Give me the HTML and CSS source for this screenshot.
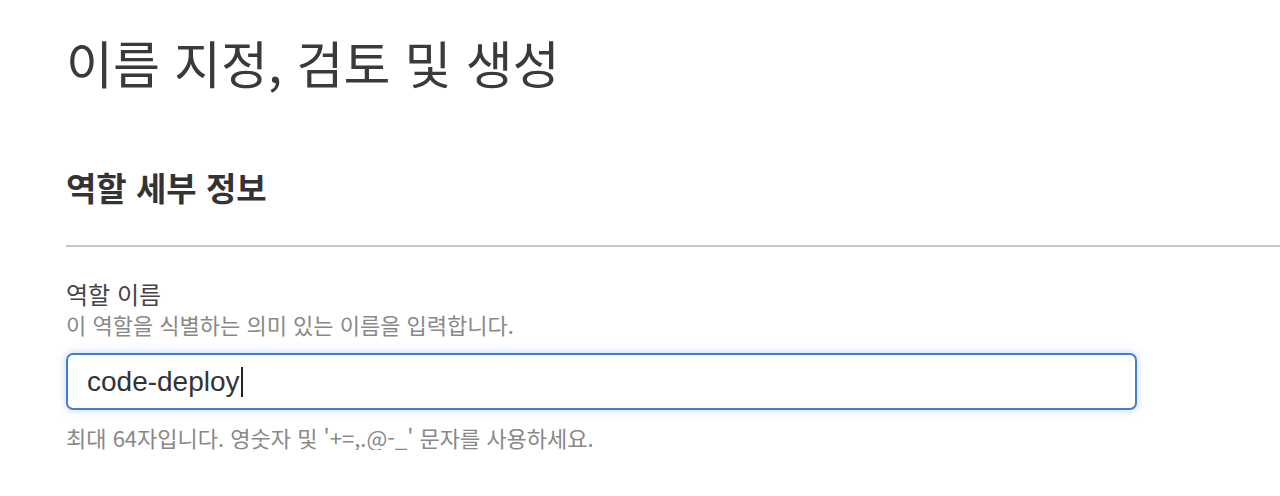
FILE: index.html
```html
<!DOCTYPE html>
<html lang="ko">
<head>
    <meta charset="UTF-8">
    <meta name="viewport" content="width=device-width, initial-scale=1.0">
    <title>이름 지정, 검토 및 생성</title>
    <link rel="stylesheet" href="styles.css">
</head>
<body>
    <div class="page">
        <h1 class="page-title">이름 지정, 검토 및 생성</h1>

        <!-- Role details -->
        <section class="panel">
            <h2 class="panel-title">역할 세부 정보</h2>
            <div class="field">
                <label class="field-label" for="role-name">역할 이름</label>
                <p class="field-desc">이 역할을 식별하는 의미 있는 이름을 입력합니다.</p>
                <div class="input-box">
                    <span class="input-value" id="role-name">code-deploy</span><span class="caret"></span>
                </div>
                <p class="field-hint">최대 64자입니다. 영숫자 및 '+=,.@-_' 문자를 사용하세요.</p>
            </div>
        </section>
    </div>
</body>
</html>
```

FILE: styles.css
```css
/* Name, review and create page */
body {
    margin: 0;
    background: #fff;
    font-family: "Noto Sans CJK KR", "Noto Sans", sans-serif;
    color: #333;
}

.page {
    padding: 32px 0 0 66px;
}

.page-title {
    margin: 0;
    font-size: 51px;
    font-weight: 400;
    line-height: 60px;
    color: #3a3a3a;
}

.panel {
    margin-top: 73px;
}

.panel-title {
    margin: 0;
    font-size: 33px;
    font-weight: 700;
    line-height: 44px;
    color: #333;
    padding-bottom: 36px;
    border-bottom: 2px solid #c8c8c8;
}

.field {
    padding-top: 32px;
}

.field-label {
    display: block;
    font-size: 24px;
    line-height: 30px;
    color: #444;
}

.field-desc {
    margin: 2px 0 0;
    font-size: 22px;
    line-height: 26px;
    color: #888;
}

.input-box {
    margin-top: 16px;
    width: 1071px;
    height: 57px;
    box-sizing: border-box;
    border: 2px solid #3f7fd8;
    border-radius: 7px;
    box-shadow: 0 0 9px rgba(80, 140, 230, 0.35);
    display: flex;
    align-items: center;
    padding-left: 19px;
}

.input-value {
    font-family: "Liberation Sans", "Noto Sans", sans-serif;
    font-size: 28px;
    color: #333;
}

.caret {
    width: 2px;
    height: 30px;
    margin-left: 1px;
    background: #222;
}

.field-hint {
    margin: 14px 0 0;
    font-size: 22px;
    line-height: 26px;
    color: #888;
}
```
